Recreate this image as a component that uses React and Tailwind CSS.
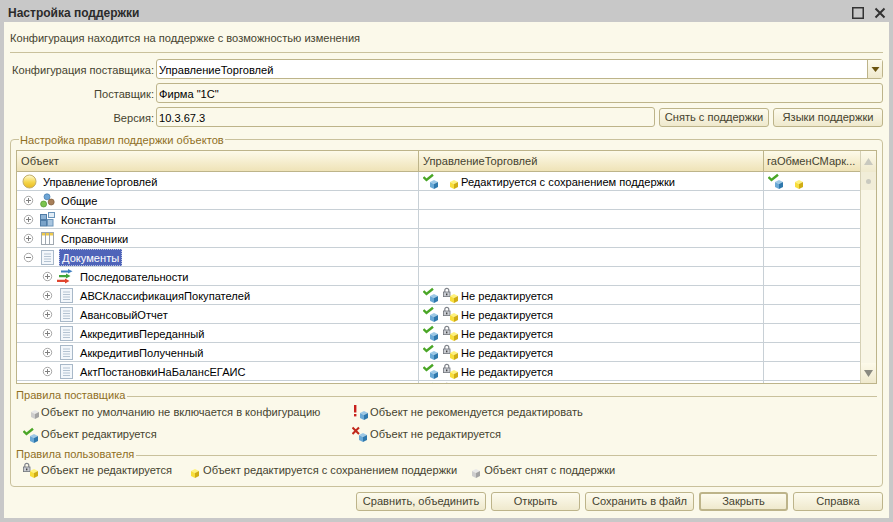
const font = { fontFamily: '"Liberation Sans", Arial, sans-serif' };

function Cube({ x = 0, y = 0, c = 'blue' }) {
  const p = {
    blue: ['#9cc8e6', '#6aa9d6', '#2f78ad'],
    yellow: ['#fff27a', '#f8de3c', '#d0ad14'],
    gray: ['#e8e8e8', '#cdcdcd', '#a3a3a3'],
  }[c];
  return (
    <g transform={`translate(${x} ${y})`}>
      <path d="M0 2 L4 0 L8 2 L4 4 Z" fill={p[0]} />
      <path d="M0 2 L4 4 L4 9 L0 7 Z" fill={p[1]} />
      <path d="M8 2 L4 4 L4 9 L8 7 Z" fill={p[2]} />
    </g>
  );
}
const Check = ({ x = 0, y = 0 }) => (
  <path transform={`translate(${x} ${y})`} d="M0.5 3 L3.5 6 L10 0.7" fill="none" stroke="#4aa626" strokeWidth="2.4" />
);
const Lock = ({ x = 0, y = 0 }) => (
  <g transform={`translate(${x} ${y})`}>
    <path d="M1.8 4 V2.4 A2 2 0 0 1 5.8 2.4 V4" fill="none" stroke="#7f838a" strokeWidth="1.2" />
    <rect x="0.5" y="4" width="6.5" height="4.6" fill="#c9ccd2" stroke="#6f737a" strokeWidth="0.8" />
    <rect x="3" y="5.5" width="1.4" height="1.8" fill="#444" />
  </g>
);
const Excl = ({ x = 0, y = 0 }) => (
  <g transform={`translate(${x} ${y})`}>
    <rect x="0" y="0" width="2.4" height="7.5" fill="#c8201c" />
    <rect x="0" y="9" width="2.4" height="2.4" fill="#c8201c" />
  </g>
);
const Cross = ({ x = 0, y = 0 }) => (
  <path transform={`translate(${x} ${y})`} d="M0.5 0.5 L7 7 M7 0.5 L0.5 7" stroke="#c0281c" strokeWidth="2" />
);

const StatusIcon = ({ locked }) => (
  <svg width="38" height="18" className="shrink-0">
    <Check x={0} y={2} />
    <Cube x={7} y={8} c="blue" />
    {locked && <Lock x={20} y={2} />}
    <Cube x={27} y={8} c="yellow" />
  </svg>
);

const LegendIcon = ({ children, w = 20 }) => (
  <svg width={w} height="18" className="shrink-0">{children}</svg>
);

const Plus = ({ minus }) => (
  <svg width="11" height="11" className="shrink-0">
    <circle cx="5.5" cy="5.5" r="4.2" fill="#fff" stroke="#a8a8a8" />
    <path d={minus ? 'M3 5.5 H8' : 'M3 5.5 H8 M5.5 3 V8'} stroke="#808080" />
  </svg>
);

const Doc = () => (
  <svg width="15" height="15" className="shrink-0">
    <rect x="1.5" y="0.5" width="12" height="14" fill="#f3f7fb" stroke="#a8b8c8" />
    <path d="M4 4 H11 M4 6.5 H11 M4 9 H11 M4 11.5 H11" stroke="#b4c3d2" />
  </svg>
);
const Common = () => (
  <svg width="15" height="15" className="shrink-0">
    <circle cx="7" cy="3.8" r="3" fill="#6fa6d6" stroke="#3f76a8" strokeWidth="0.7" />
    <circle cx="3.6" cy="11" r="3" fill="#7cc44f" stroke="#4d9428" strokeWidth="0.7" />
    <circle cx="11.2" cy="9" r="3" fill="#a8805a" stroke="#7a5836" strokeWidth="0.7" />
  </svg>
);
const Constants = () => (
  <svg width="15" height="15" className="shrink-0">
    <rect x="0.5" y="2.5" width="6" height="5" fill="#8fb4d6" stroke="#4f7ca6" />
    <rect x="8.5" y="0.5" width="6" height="5" fill="#e2edf6" stroke="#6a94ba" />
    <rect x="0.5" y="8.5" width="6" height="5.5" fill="#7aa3c9" stroke="#4f7ca6" />
    <rect x="7.5" y="7.5" width="5.5" height="6.5" fill="#a9c6e0" stroke="#6a94ba" />
  </svg>
);
const Catalog = () => (
  <svg width="15" height="15" className="shrink-0">
    <rect x="1.5" y="1.5" width="12" height="12" fill="#fff" stroke="#a0a8b0" />
    <rect x="2" y="2" width="11" height="2.5" fill="#eec94a" />
    <path d="M5.5 2 V13 M9.5 2 V13" stroke="#a0a8b0" />
  </svg>
);
const Seq = () => (
  <svg width="17" height="15" className="shrink-0">
    <path d="M5 1.5 H12 V0 L16.5 2.3 L12 4.6 V3.6 H5 Z" fill="#3f7fc0" />
    <path d="M3 6 H10 V4.5 L14.5 7 L10 9.5 V8.2 H3 Z" fill="#3fa53a" />
    <path d="M1 10.7 H9 V9.5 L13.5 12 L9 14.5 V13 H1 Z" fill="#e0452f" />
  </svg>
);
const Root = () => (
  <svg width="15" height="15" className="shrink-0">
    <defs>
      <linearGradient id="rg" x1="0" y1="0" x2="0" y2="1">
        <stop offset="0" stopColor="#fffbd8" />
        <stop offset="0.55" stopColor="#f5d64a" />
        <stop offset="1" stopColor="#e8b820" />
      </linearGradient>
    </defs>
    <circle cx="7.5" cy="7.5" r="6.5" fill="url(#rg)" stroke="#c2ae6a" />
  </svg>
);

const Btn = ({ w, children, def }) => (
  <div
    className={`h-[19px] pt-[1px] flex items-center justify-center rounded-[3px] border border-[#bdb48a] bg-gradient-to-b from-[#fdfbee] to-[#efe9cd] text-[#45432f] text-[11.1px] leading-none ${def ? 'border-2' : ''}`}
    style={{ width: w }}
  >
    {children}
  </div>
);

const Field = ({ label, children }) => (
  <div className="flex items-center h-[20px]">
    <div className="w-[144px] mr-[2px] pt-[3px] text-right text-[#45432f] text-[11.1px] leading-none whitespace-nowrap">{label}</div>
    {children}
  </div>
);

const rows = [
  { level: 0, icon: <Root />, text: 'УправлениеТорговлей', root: true },
  { level: 1, icon: <Common />, text: 'Общие' },
  { level: 1, icon: <Constants />, text: 'Константы' },
  { level: 1, icon: <Catalog />, text: 'Справочники' },
  { level: 1, icon: <Doc />, text: 'Документы', minus: true, selected: true },
  { level: 2, icon: <Seq />, text: 'Последовательности', seq: true },
  { level: 2, icon: <Doc />, text: 'АВСКлассификацияПокупателей', locked: true },
  { level: 2, icon: <Doc />, text: 'АвансовыйОтчет', locked: true },
  { level: 2, icon: <Doc />, text: 'АккредитивПереданный', locked: true },
  { level: 2, icon: <Doc />, text: 'АккредитивПолученный', locked: true },
  { level: 2, icon: <Doc />, text: 'АктПостановкиНаБалансЕГАИС', locked: true },
  { level: 2, icon: <Doc />, text: '', locked: true, partial: true },
];

function Row({ r }) {
  return (
    <div className="flex h-[19px] shrink-0 border-b border-[#c8d0d6] bg-white text-[11.1px] leading-none text-black">
      <div className="w-[402px] shrink-0 border-r border-[#c8d0d6] flex items-center">
        {r.level === 0 && (
          <div className="flex items-center pl-[5px] gap-[6px]">
            {r.icon}
            <span className="pt-[3px]">{r.text}</span>
          </div>
        )}
        {r.level === 1 && (
          <div className="flex items-center pl-[6px]">
            <Plus minus={r.minus} />
            <span className="ml-[6px]">{r.icon}</span>
            <span className={`ml-[4px] px-[2px] h-[17px] pt-[3px] flex items-center ${r.selected ? 'bg-[#4f64b9] text-white border border-dotted border-[#b9c1e4]' : ''}`}>{r.text}</span>
          </div>
        )}
        {r.level === 2 && (
          <div className="flex items-center pl-[25px]">
            <Plus />
            <span className={r.seq ? 'ml-[3px]' : 'ml-[6px]'}>{r.icon}</span>
            <span className={`pt-[3px] ${r.seq ? 'ml-[7px]' : 'ml-[6px]'}`}>{r.text}</span>
          </div>
        )}
      </div>
      <div className="w-[345px] shrink-0 border-r border-[#c8d0d6] flex items-center pl-[4px]">
        {r.level === 0 ? (
          <>
            <StatusIcon />
            <span className="pt-[3px]">Редактируется с сохранением поддержки</span>
          </>
        ) : r.locked ? (
          <>
            <StatusIcon locked />
            {!r.partial && <span className="pt-[3px]">Не редактируется</span>}
          </>
        ) : null}
      </div>
      <div className="flex-1 flex items-center pl-[4px]">{r.level === 0 && <StatusIcon />}</div>
    </div>
  );
}

const LegendHead = ({ children }) => (
  <div className="flex items-center h-[14px] text-[#8f6f1f] text-[11.1px] leading-none">
    <span className="mr-[2px] whitespace-nowrap">{children}</span>
    <div className="flex-1 h-px bg-[#c9c19c]" />
  </div>
);

const Note = ({ icon, children, className = '' }) => (
  <div className={`flex items-center text-[#45432f] text-[11.1px] leading-none whitespace-nowrap ${className}`}>
    {icon}
    <span>{children}</span>
  </div>
);

export default function App() {
  return (
    <div className="w-[893px] h-[522px] bg-[#c8c8c8] flex flex-col pl-[4px] pr-[4px] pb-[4px] overflow-hidden" style={font}>
      <div className="h-[22px] shrink-0 flex items-center justify-between pl-[4px] pr-[3px]">
        <span className="text-[12px] pt-[3px] font-bold text-[#2b2b2b] leading-none">Настройка поддержки</span>
        <div className="flex items-center gap-[10px] pt-[3px]">
          <svg width="12" height="12"><rect x="0.75" y="0.75" width="10.5" height="10.5" fill="none" stroke="#333" strokeWidth="1.5" /></svg>
          <svg width="12" height="12"><path d="M1.5 1.5 L10.5 10.5 M10.5 1.5 L1.5 10.5" stroke="#333" strokeWidth="2" /></svg>
        </div>
      </div>
      <div className="flex-1 min-h-0 bg-[#fbf9ea] px-[6px] flex flex-col">
        <div className="h-[31px] shrink-0 pt-[3px] flex items-center border-b border-[#c9c19c] text-[#45432f] text-[11.1px] leading-none">
          Конфигурация находится на поддержке с возможностью изменения
        </div>
        <div className="mt-[6px] flex flex-col gap-[4px] shrink-0">
          <Field label="Конфигурация поставщика:">
            <div className="flex-1 h-[20px] rounded-[3px] border border-[#bdb48a] bg-white flex items-center pl-[2px] text-[11.1px] leading-none text-black">
              <span className="flex-1 pt-[3px]">УправлениеТорговлей</span>
              <div className="w-[15px] h-full border-l border-[#bdb48a] bg-gradient-to-b from-[#fdfbee] to-[#efe9cd] flex items-center justify-center">
                <svg width="9" height="5"><path d="M0.5 0 H8.5 L4.5 5 Z" fill="#6b5410" /></svg>
              </div>
            </div>
          </Field>
          <Field label="Поставщик:">
            <div className="flex-1 h-[20px] pt-[3px] rounded-[3px] border border-[#bdb48a] bg-[#fbf9ea] flex items-center pl-[2px] text-[11.1px] leading-none text-black">Фирма "1С"</div>
          </Field>
          <Field label="Версия:">
            <div className="flex-1 h-[20px] pt-[3px] rounded-[3px] border border-[#bdb48a] bg-[#fbf9ea] flex items-center pl-[2px] text-[11.1px] leading-none text-black">10.3.67.3</div>
            <div className="ml-[4px]"><Btn w={110}>Снять с поддержки</Btn></div>
            <div className="ml-[4px]"><Btn w={110}>Языки поддержки</Btn></div>
          </Field>
        </div>
        <div className="mt-[12px] h-[348px] shrink-0 rounded-[4px] border border-[#c9c19c] px-[5px] flex flex-col">
          <div className="-mt-[7px] ml-[3px] h-[14px] w-fit shrink-0 px-[1px] bg-[#fbf9ea] text-[#8f6f1f] text-[11.1px] leading-[14px]">
            Настройка правил поддержки объектов
          </div>
          <div className="mt-[3px] h-[234px] shrink-0 border border-[#bdb48a] flex bg-white overflow-hidden">
            <div className="w-[843px] shrink-0 flex flex-col">
              <div className="h-[21px] shrink-0 flex bg-gradient-to-b from-[#fdfaea] to-[#efe3b7] border-b border-[#bdb48a] text-[#45432f] text-[11.1px] leading-none">
                <div className="w-[402px] shrink-0 border-r border-[#bdb48a] pt-[2px] flex items-center pl-[4px]">Объект</div>
                <div className="w-[345px] shrink-0 border-r border-[#bdb48a] pt-[2px] flex items-center pl-[4px]">УправлениеТорговлей</div>
                <div className="flex-1 flex items-center pt-[2px] pl-[3px] whitespace-nowrap overflow-hidden">гаОбменСМарк...</div>
              </div>
              <div className="flex-1 min-h-0 overflow-hidden flex flex-col">
                {rows.map((r, i) => <Row key={i} r={r} />)}
              </div>
            </div>
            <div className="flex-1 border-l border-[#d5d0b5] bg-[#f9f6e6] flex flex-col">
              <div className="h-[21px] shrink-0 bg-gradient-to-b from-[#fdfaea] to-[#efe9cd] flex items-center justify-center">
                <svg width="9" height="7"><path d="M4.5 0 L9 7 H0 Z" fill="#c9c9bf" /></svg>
              </div>
              <div className="h-[18px] shrink-0 bg-[#f1edd8] flex items-center justify-center">
                <div className="w-[5px] h-[5px] rounded-full bg-[#c9c9bf]" />
              </div>
              <div className="flex-1" />
              <div className="h-[20px] shrink-0 bg-gradient-to-b from-[#fdfaea] to-[#efe9cd] flex items-center justify-center">
                <svg width="9" height="7"><path d="M0 0 H9 L4.5 7 Z" fill="#8a8a80" /></svg>
              </div>
            </div>
          </div>
          <div className="mt-[5px] shrink-0"><LegendHead>Правила поставщика</LegendHead></div>
          <div className="-mt-[1px] shrink-0 grid grid-cols-[329px_1fr] pl-[7px]">
            <Note className="h-[22px] pl-[3px]" icon={<LegendIcon w={15}><Cube x={5} y={6} c="gray" /></LegendIcon>}>Объект по умолчанию не включается в конфигурацию</Note>
            <Note className="h-[22px]" icon={<LegendIcon w={18}><Excl x={2} y={1} /><Cube x={8} y={7} c="blue" /></LegendIcon>}>Объект не рекомендуется редактировать</Note>
            <Note className="h-[22px]" icon={<LegendIcon w={18}><Check x={0} y={2} /><Cube x={7} y={8} c="blue" /></LegendIcon>}>Объект редактируется</Note>
            <Note className="h-[22px]" icon={<LegendIcon w={18}><Cross x={0} y={1} /><Cube x={7} y={7} c="blue" /></LegendIcon>}>Объект не редактируется</Note>
          </div>
          <div className="mt-[2px] shrink-0"><LegendHead>Правила пользователя</LegendHead></div>
          <div className="-mt-[1px] shrink-0 flex h-[20px] pl-[7px]">
            <Note icon={<LegendIcon w={18}><Lock x={0} y={1} /><Cube x={7} y={7} c="yellow" /></LegendIcon>}>Объект не редактируется</Note>
            <Note className="ml-[18px]" icon={<LegendIcon w={13}><Cube x={1} y={7} c="yellow" /></LegendIcon>}>Объект редактируется с сохранением поддержки</Note>
            <Note className="ml-[15px]" icon={<LegendIcon w={12}><Cube x={0} y={7} c="gray" /></LegendIcon>}>Объект снят с поддержки</Note>
          </div>
        </div>
        <div className="mt-[5px] shrink-0 flex justify-end gap-[5px]">
          <Btn w={130}>Сравнить, объединить</Btn>
          <Btn w={89}>Открыть</Btn>
          <Btn w={109}>Сохранить в файл</Btn>
          <Btn w={89} def>Закрыть</Btn>
          <Btn w={90}>Справка</Btn>
        </div>
      </div>
    </div>
  );
}
